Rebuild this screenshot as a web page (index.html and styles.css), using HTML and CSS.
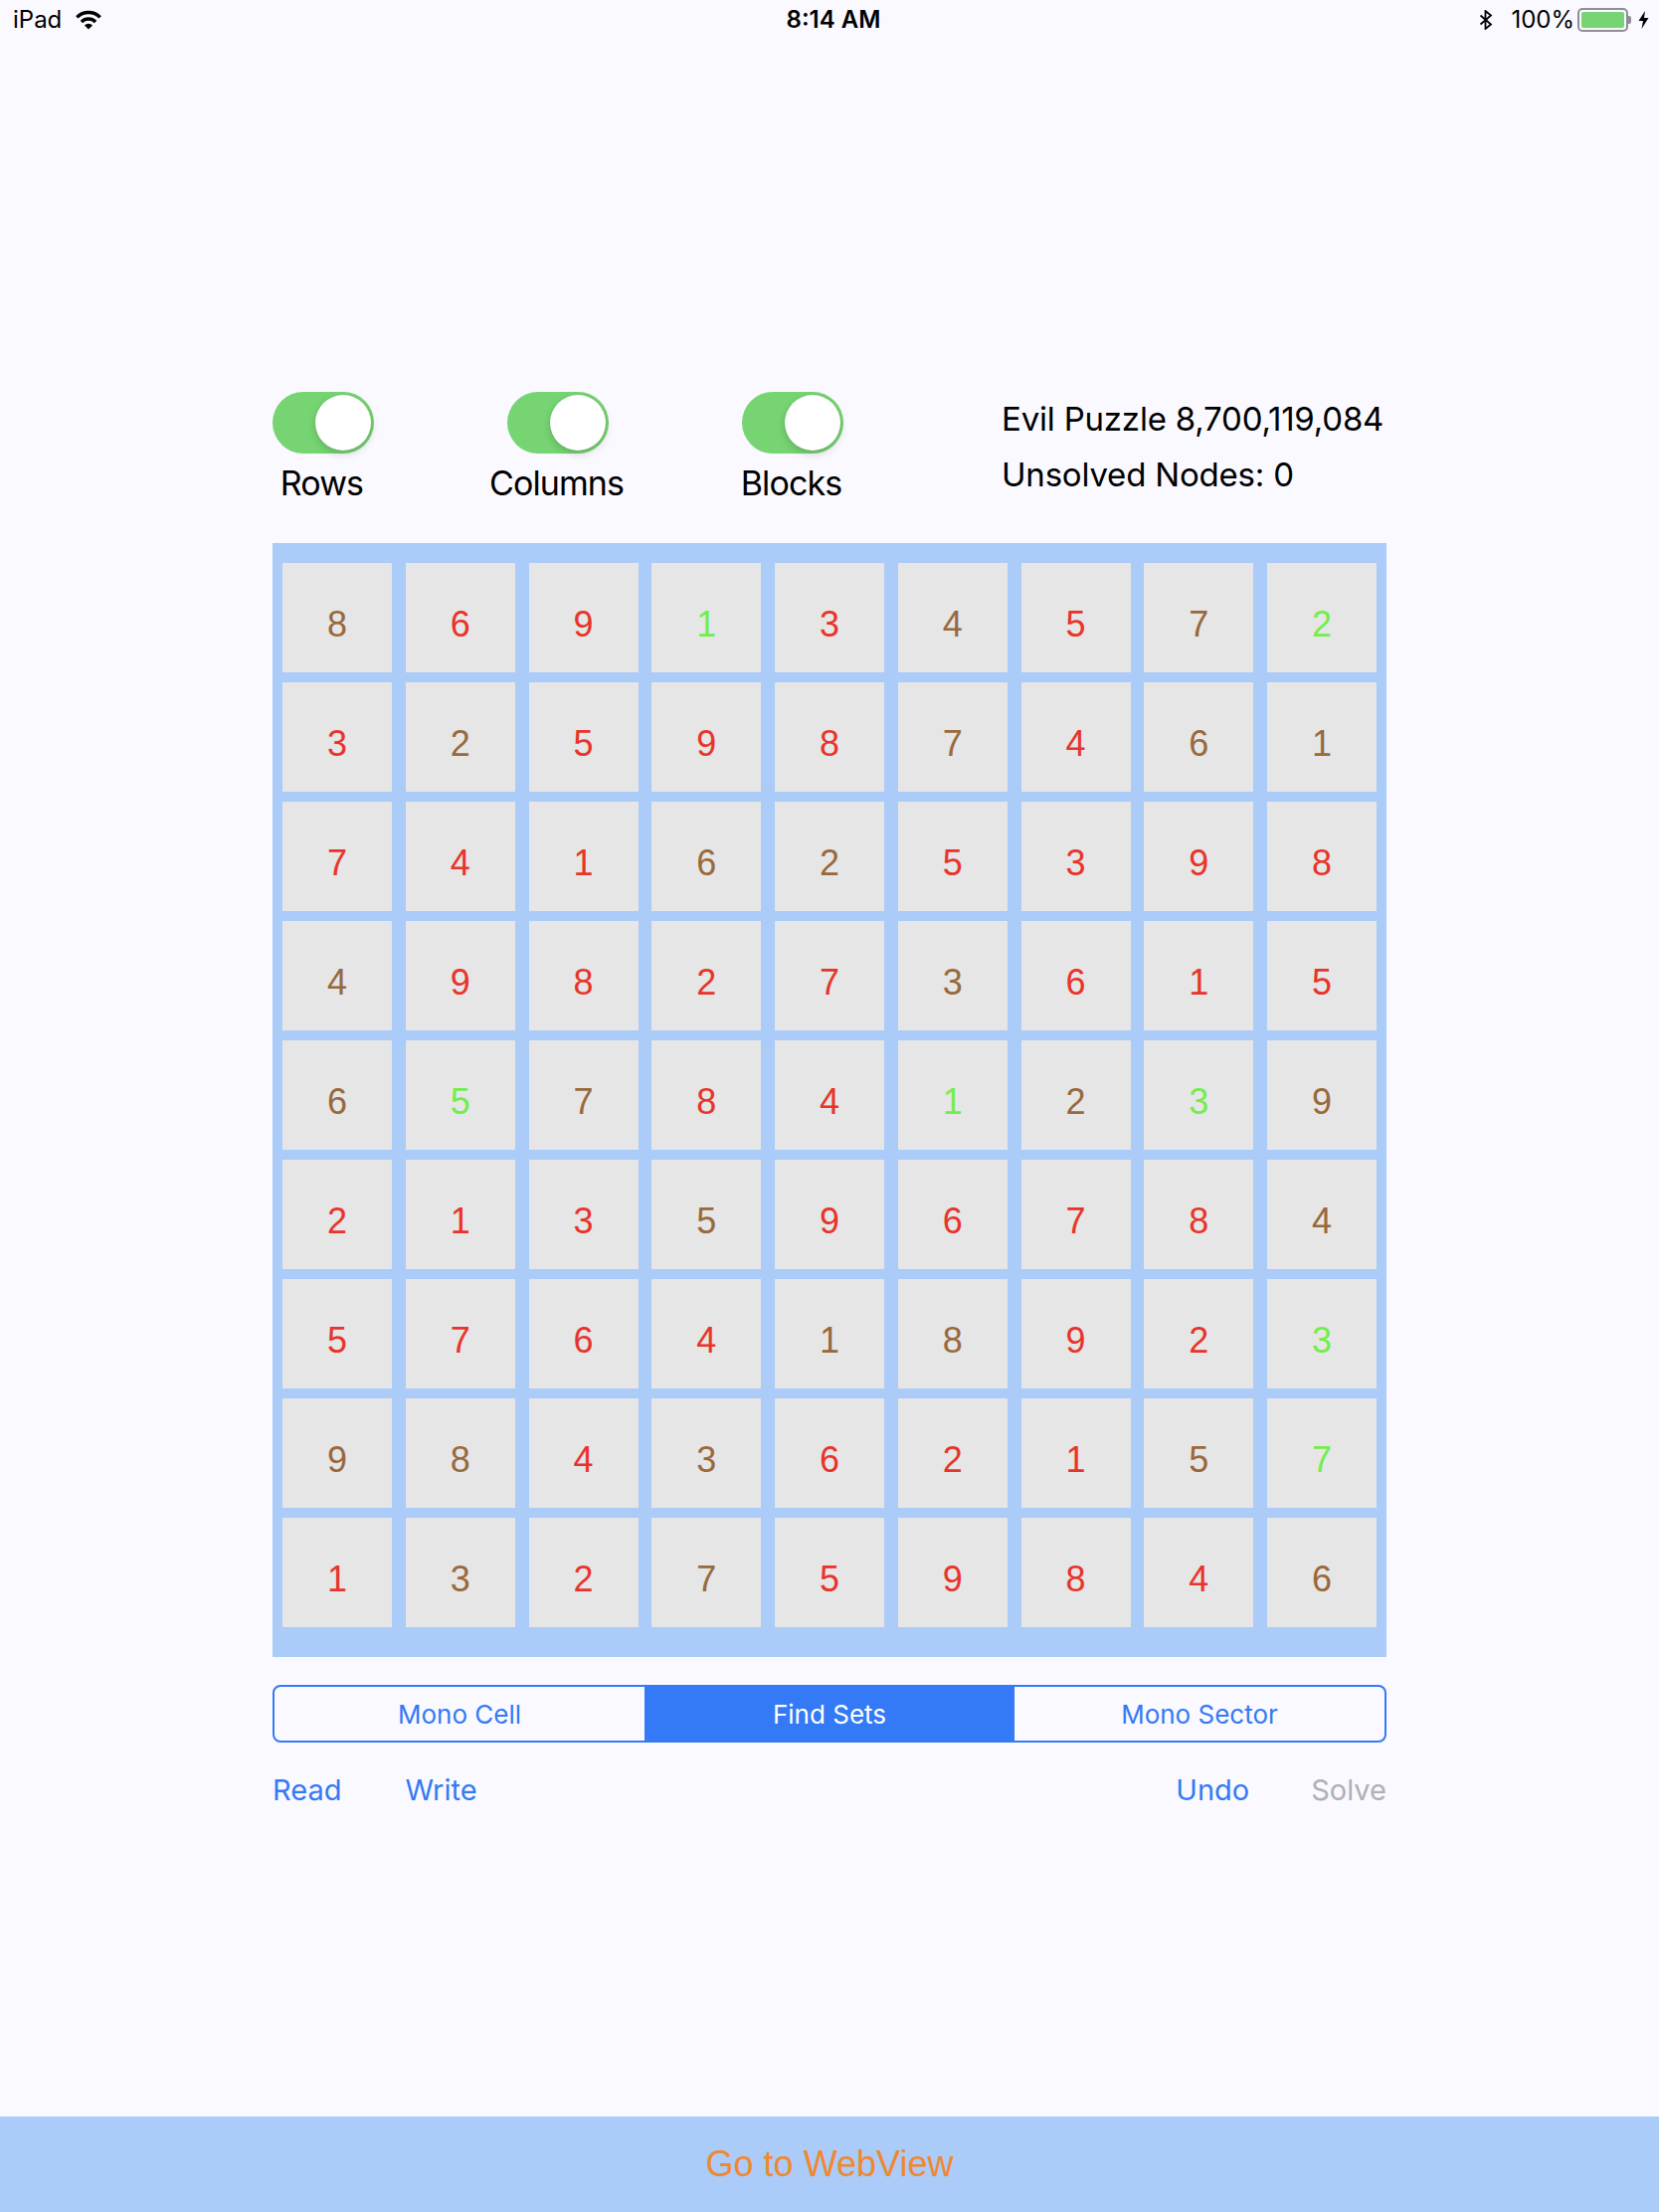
FILE: index.html
```html
<!DOCTYPE html>
<html>
<head>
<meta charset="utf-8">
<link rel="stylesheet" href="styles.css">
</head>
<body>
<div class="status">
  <div class="st-left">
    <span class="st-text">iPad</span>
    <svg class="wifi" width="28" height="20" viewBox="0 0 28 20">
      <path d="M2.33 7.33 A16.5 16.5 0 0 1 25.67 7.33" fill="none" stroke="#000" stroke-width="3.4"/>
      <path d="M6.93 11.93 A10 10 0 0 1 21.07 11.93" fill="none" stroke="#000" stroke-width="3.4"/>
      <path d="M14 19.5 L9.9 15.4 A5.8 5.8 0 0 1 18.1 15.4 Z" fill="#000"/>
    </svg>
  </div>
  <div class="st-time">8:14 AM</div>
  <div class="st-right">
    <svg class="bt" width="14" height="20" viewBox="0 0 14 20">
      <path d="M1.5 5.5 L12 14.5 L6.5 19 L6.5 1 L12 5.5 L1.5 14.5" fill="none" stroke="#000" stroke-width="1.8" stroke-linejoin="miter"/>
    </svg>
    <span class="st-text">100%</span>
    <div class="battery"><div class="batt-fill"></div></div>
    <div class="batt-nub"></div>
    <svg class="bolt" width="11" height="18" viewBox="0 0 11 18">
      <path d="M7 0 L0.5 10 L5 10 L3.5 18 L10.5 7 L6 7 Z" fill="#000"/>
    </svg>
  </div>
</div>

<main class="content">
  <div class="controls">
    <div class="toggles">
      <div class="tog-col">
        <div class="switch"><div class="knob"></div></div>
        <div class="tog-label">Rows</div>
      </div>
      <div class="tog-col">
        <div class="switch"><div class="knob"></div></div>
        <div class="tog-label">Columns</div>
      </div>
      <div class="tog-col">
        <div class="switch"><div class="knob"></div></div>
        <div class="tog-label">Blocks</div>
      </div>
    </div>
    <div class="info">
      <div class="info-line">Evil Puzzle 8,700,119,084</div>
      <div class="info-line">Unsolved Nodes: 0</div>
    </div>
  </div>

  <div class="board">
    <div class="cell b">8</div><div class="cell r">6</div><div class="cell r">9</div><div class="cell g">1</div><div class="cell r">3</div><div class="cell b">4</div><div class="cell r">5</div><div class="cell b">7</div><div class="cell g">2</div>
    <div class="cell r">3</div><div class="cell b">2</div><div class="cell r">5</div><div class="cell r">9</div><div class="cell r">8</div><div class="cell b">7</div><div class="cell r">4</div><div class="cell b">6</div><div class="cell b">1</div>
    <div class="cell r">7</div><div class="cell r">4</div><div class="cell r">1</div><div class="cell b">6</div><div class="cell b">2</div><div class="cell r">5</div><div class="cell r">3</div><div class="cell r">9</div><div class="cell r">8</div>
    <div class="cell b">4</div><div class="cell r">9</div><div class="cell r">8</div><div class="cell r">2</div><div class="cell r">7</div><div class="cell b">3</div><div class="cell r">6</div><div class="cell r">1</div><div class="cell r">5</div>
    <div class="cell b">6</div><div class="cell g">5</div><div class="cell b">7</div><div class="cell r">8</div><div class="cell r">4</div><div class="cell g">1</div><div class="cell b">2</div><div class="cell g">3</div><div class="cell b">9</div>
    <div class="cell r">2</div><div class="cell r">1</div><div class="cell r">3</div><div class="cell b">5</div><div class="cell r">9</div><div class="cell r">6</div><div class="cell r">7</div><div class="cell r">8</div><div class="cell b">4</div>
    <div class="cell r">5</div><div class="cell r">7</div><div class="cell r">6</div><div class="cell r">4</div><div class="cell b">1</div><div class="cell b">8</div><div class="cell r">9</div><div class="cell r">2</div><div class="cell g">3</div>
    <div class="cell b">9</div><div class="cell b">8</div><div class="cell r">4</div><div class="cell b">3</div><div class="cell r">6</div><div class="cell r">2</div><div class="cell r">1</div><div class="cell b">5</div><div class="cell g">7</div>
    <div class="cell r">1</div><div class="cell b">3</div><div class="cell r">2</div><div class="cell b">7</div><div class="cell r">5</div><div class="cell r">9</div><div class="cell r">8</div><div class="cell r">4</div><div class="cell b">6</div>
  </div>

  <div class="segmented">
    <div class="seg">Mono Cell</div>
    <div class="seg seg-on">Find Sets</div>
    <div class="seg">Mono Sector</div>
  </div>

  <div class="actions">
    <div class="act-group">
      <span class="act">Read</span>
      <span class="act">Write</span>
    </div>
    <div class="act-group act-right">
      <span class="act">Undo</span>
      <span class="act act-off">Solve</span>
    </div>
  </div>
</main>

<div class="bottom-bar">Go to WebView</div>
</body>
</html>
```

FILE: styles.css
```css
html, body {
  margin: 0;
  padding: 0;
}
body {
  background: #f9f9ff;
  font-family: Inter, "Noto Sans", "DejaVu Sans", sans-serif;
  color: #000;
  width: 1668px;
  height: 2224px;
  display: flex;
  flex-direction: column;
  overflow: hidden;
}

/* status bar */
.status {
  height: 40px;
  display: flex;
  align-items: center;
  justify-content: space-between;
  padding: 0 10px 0 13px;
  position: relative;
}
.st-left, .st-right {
  display: flex;
  align-items: center;
}
.st-text {
  font-size: 24px;
  line-height: 40px;
}
.wifi {
  margin-left: 13px;
  margin-top: -1px;
}
.st-time {
  position: absolute;
  left: 0;
  right: 0;
  text-align: center;
  font-size: 24px;
  font-weight: 600;
  line-height: 40px;
  padding-left: 8px;
}
.bt {
  margin-right: 2px;
}
.st-right .st-text {
  margin-left: 16px;
  margin-right: 3px;
}
.battery {
  width: 43px;
  height: 16px;
  border: 2px solid #8e8e93;
  border-radius: 5px;
  padding: 2px;
}
.batt-fill {
  width: 100%;
  height: 100%;
  background: #76d572;
  border-radius: 2px;
}
.batt-nub {
  width: 3px;
  height: 8px;
  background: #8e8e93;
  border-radius: 0 2px 2px 0;
}
.bolt {
  margin-left: 7px;
}

/* content */
.content {
  margin-left: 274px;
  width: 1120px;
  padding-top: 354px;
}
.controls {
  display: flex;
  align-items: flex-start;
  height: 112px;
}
.toggles {
  display: flex;
  gap: 134px;
}
.tog-col {
  width: 102px;
  display: flex;
  flex-direction: column;
  align-items: center;
}
.switch {
  width: 102px;
  height: 62px;
  border-radius: 31px;
  background: #76d572;
  position: relative;
}
.knob {
  position: absolute;
  right: 3px;
  top: 3px;
  width: 56px;
  height: 56px;
  border-radius: 50%;
  background: #fff;
  box-shadow: 0 3px 8px rgba(0, 0, 0, 0.18), 0 0 1px rgba(0, 0, 0, 0.12);
}
.tog-label {
  margin-top: 10px;
  margin-right: 3px;
  font-size: 34px;
  line-height: 40px;
  letter-spacing: -0.9px;
  white-space: nowrap;
}
.info {
  margin-left: 159px;
  margin-top: -1px;
}
.info-line {
  font-size: 33px;
  line-height: 56px;
  letter-spacing: -0.2px;
  white-space: nowrap;
}

/* board */
.board {
  margin-top: 40px;
  width: 1120px;
  height: 1120px;
  box-sizing: border-box;
  background: #abcbf8;
  padding: 20px 10px 30px 10px;
  display: grid;
  grid-template-columns: repeat(9, 110px);
  grid-template-rows: repeat(9, 110px);
  column-gap: 13.75px;
  row-gap: 10px;
}
.cell {
  background: #e6e6e6;
  box-sizing: border-box;
  padding-top: 14px;
  display: flex;
  align-items: center;
  justify-content: center;
  font-family: "Liberation Sans", Arial, sans-serif;
  font-size: 36px;
}
.cell.b { color: #98693d; }
.cell.r { color: #e8342a; }
.cell.g { color: #72ee4c; }

/* segmented */
.segmented {
  margin-top: 28px;
  height: 58px;
  box-sizing: border-box;
  border: 2px solid #3479f6;
  border-radius: 8px;
  display: flex;
  overflow: hidden;
}
.seg {
  flex: 1;
  display: flex;
  align-items: center;
  justify-content: center;
  font-size: 26px;
  color: #3479f6;
}
.seg-on {
  background: #3479f6;
  color: #fff;
}

/* actions */
.actions {
  margin-top: 28px;
  display: flex;
  justify-content: space-between;
}
.act-group {
  display: flex;
  gap: 64px;
}
.act-right {
  gap: 62px;
}
.act {
  font-size: 29px;
  line-height: 40px;
  color: #3479f6;
}
.act-off {
  color: #b0b0b5;
}

/* bottom bar */
.bottom-bar {
  margin-top: auto;
  height: 96px;
  background: #abcbf8;
  display: flex;
  align-items: center;
  justify-content: center;
  font-family: "Liberation Sans", Arial, sans-serif;
  font-size: 36px;
  color: #f0882f;
}
```
